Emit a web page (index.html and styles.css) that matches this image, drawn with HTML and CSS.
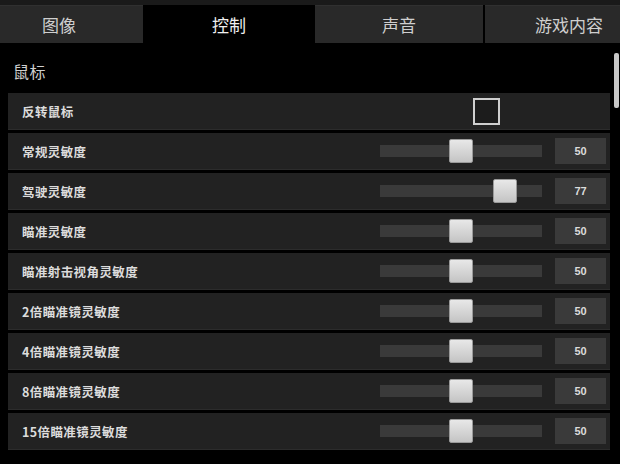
FILE: index.html
```html
<!DOCTYPE html>
<html lang="zh">
<head>
<meta charset="utf-8">
<link rel="stylesheet" href="styles.css">
</head>
<body>
<div class="page">
  <div class="tabs">
    <div class="tab">图像</div>
    <div class="tab active">控制</div>
    <div class="tab">声音</div>
    <div class="tab">游戏内容</div>
  </div>
  <div class="content">
    <div class="section-title">鼠标</div>
    <div class="row">
      <div class="label">反转鼠标</div>
      <div class="checkbox"></div>
    </div>
    <div class="row">
      <div class="label">常规灵敏度</div>
      <div class="track"><div class="thumb" style="left:50%"></div></div>
      <div class="val">50</div>
    </div>
    <div class="row">
      <div class="label">驾驶灵敏度</div>
      <div class="track"><div class="thumb" style="left:77%"></div></div>
      <div class="val">77</div>
    </div>
    <div class="row">
      <div class="label">瞄准灵敏度</div>
      <div class="track"><div class="thumb" style="left:50%"></div></div>
      <div class="val">50</div>
    </div>
    <div class="row">
      <div class="label">瞄准射击视角灵敏度</div>
      <div class="track"><div class="thumb" style="left:50%"></div></div>
      <div class="val">50</div>
    </div>
    <div class="row">
      <div class="label">2倍瞄准镜灵敏度</div>
      <div class="track"><div class="thumb" style="left:50%"></div></div>
      <div class="val">50</div>
    </div>
    <div class="row">
      <div class="label">4倍瞄准镜灵敏度</div>
      <div class="track"><div class="thumb" style="left:50%"></div></div>
      <div class="val">50</div>
    </div>
    <div class="row">
      <div class="label">8倍瞄准镜灵敏度</div>
      <div class="track"><div class="thumb" style="left:50%"></div></div>
      <div class="val">50</div>
    </div>
    <div class="row">
      <div class="label">15倍瞄准镜灵敏度</div>
      <div class="track"><div class="thumb" style="left:50%"></div></div>
      <div class="val">50</div>
    </div>
    <div class="section-title next">游戏手柄</div>
  </div>
  <div class="scrollbar"></div>
</div>
</body>
</html>
```

FILE: styles.css
```css
html, body {
  margin: 0;
  padding: 0;
  background: #000;
}
.page {
  position: relative;
  width: 620px;
  height: 464px;
  overflow: hidden;
  background: #000;
  font-family: "Noto Sans CJK SC", "Noto Sans", sans-serif;
  color: #d8d8d8;
}
.tabs {
  display: flex;
  gap: 2px;
  margin-left: -25px;
  padding-top: 5px;
  background: linear-gradient(#1a1a1a 0, #1a1a1a 5px, #000 5px);
}
.tab {
  flex: 0 0 168px;
  height: 38px;
  line-height: 37px;
  text-align: center;
  font-size: 17px;
  color: #cfcfcf;
  background: #292929;
  border-top: 1px solid #303030;
  box-sizing: border-box;
}
.tab.active {
  background: #000;
  border-top-color: #000;
  color: #f0f0f0;
}
.content {
  padding-left: 8px;
  width: 602px;
}
.section-title {
  padding: 16px 0 0 5px;
  height: 24px;
  line-height: 24px;
  font-size: 16px;
  letter-spacing: 0.5px;
  color: #cfcfcf;
  margin-bottom: 10px;
}
.section-title.next {
  padding-top: 10px;
}
.row {
  display: flex;
  align-items: center;
  height: 37px;
  margin-bottom: 3px;
  background: #222;
  border-bottom: 1px solid #2c2c2c;
  box-sizing: border-box;
  padding-right: 4px;
}
.label {
  flex: 1;
  padding-left: 14px;
  font-size: 12.5px;
  letter-spacing: 0.4px;
  font-weight: bold;
  color: #dcdcdc;
}
.checkbox {
  width: 27px;
  height: 27px;
  box-sizing: border-box;
  border: 2px solid #cfcfcf;
  background: #1c1c1c;
  margin-right: 106px;
}
.track {
  position: relative;
  width: 162px;
  height: 12px;
  background: #3a3a3a;
  margin-right: 13px;
}
.thumb {
  position: absolute;
  top: -6px;
  width: 24px;
  height: 24px;
  transform: translateX(-50%);
  box-sizing: border-box;
  border-radius: 2px;
  border: 1px solid #9a9a9a;
  background: linear-gradient(#e8e8e8, #c4c4c4);
}
.val {
  width: 51px;
  height: 26px;
  line-height: 26px;
  text-align: center;
  background: #3a3a3a;
  font-size: 11px;
  font-weight: bold;
  color: #dcdcdc;
  font-family: "Liberation Sans Narrow", "Liberation Sans", sans-serif;
}
.scrollbar {
  position: absolute;
  left: 614px;
  top: 53px;
  width: 5px;
  height: 55px;
  border-radius: 2px;
  background: #c8c8c8;
}
```
